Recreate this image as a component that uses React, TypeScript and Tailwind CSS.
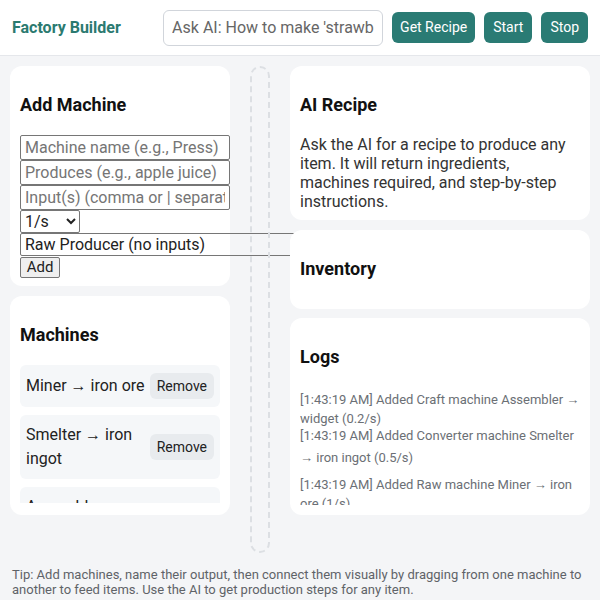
import React from "react";

const logs = [
  { text: "[1:43:19 AM] Added Craft machine Assembler → widget (0.2/s)", cls: "mt-0" },
  { text: "[1:43:19 AM] Added Converter machine Smelter → iron ingot (0.5/s)", cls: "-mt-[3px] leading-[22px]" },
  { text: "[1:43:19 AM] Added Raw machine Miner → iron ore (1/s)", cls: "mt-[6px]" },
];

const machines = ["Miner → iron ore", "Smelter → iron ingot", "Assembler → widget"];

function Card({ title, children, className = "" }: { title: string; children?: React.ReactNode; className?: string }) {
  return (
    <section className={`bg-white rounded-xl p-[10px] ${className}`}>
      <h3 className="mt-[17px] mb-[18px] text-[18px] leading-6 font-bold text-[#111]">{title}</h3>
      {children}
    </section>
  );
}

export default function App() {
  return (
    <div className="min-h-[600px] bg-[#f4f5f7] text-[#222]" style={{ fontFamily: "Roboto, 'Noto Sans', sans-serif" }}>
      <header className="h-[56px] bg-white border-b border-[#e5e7eb] flex items-center justify-between px-3">
        <h1 className="text-[16px] font-bold text-[#2b7a70]">Factory Builder</h1>
        <div className="flex items-center gap-[9px]">
          <input
            className="w-[220px] h-[36px] rounded-md border border-[#d1d5db] px-2 text-[16px] placeholder:text-[#666] outline-none"
            placeholder="Ask AI: How to make 'strawberry jam'?"
          />
          <button className="h-[31px] px-2 rounded-md bg-[#2a7b74] text-white text-[14px]">Get Recipe</button>
          <button className="h-[31px] px-[9px] rounded-md bg-[#2a7b74] text-white text-[14px]">Start</button>
          <button className="h-[31px] px-[9px] rounded-md bg-[#2a7b74] text-white text-[14px]">Stop</button>
        </div>
      </header>

      <main className="flex gap-5 px-[10px] pt-[10px]">
        <div className="w-[220px] flex flex-col gap-[10px]">
          <Card title="Add Machine" className="h-[220px]">
            <div className="flex flex-col items-start">
              <input className="block w-[210px] h-[25px] border border-[#767676] rounded-[2px] px-1 text-[16px] placeholder:text-[#757575]" placeholder="Machine name (e.g., Press)" />
              <input className="block w-[210px] h-[25px] border border-[#767676] rounded-[2px] px-1 text-[16px] placeholder:text-[#757575]" placeholder="Produces (e.g., apple juice)" />
              <input className="block w-[210px] h-[25px] border border-[#767676] rounded-[2px] px-1 text-[16px] placeholder:text-[#757575]" placeholder="Input(s) (comma or | separated)" />
              <select className="block w-[60px] h-[23px] border border-[#767676] rounded-[2px] text-[16px] bg-white">
                <option>1/s</option>
              </select>
              <select className="block w-[300px] h-[23px] border border-[#767676] rounded-[2px] text-[16px] bg-transparent">
                <option>Raw Producer (no inputs)</option>
              </select>
              <button className="mt-[1px] w-[40px] h-[21px] border border-[#767676] rounded-[2px] bg-[#efefef] text-[15px] leading-none">Add</button>
            </div>
          </Card>

          <Card title="Machines" className="h-[219px]">
            <div className="h-[138px] overflow-hidden flex flex-col gap-2">
              {machines.map((m) => (
                <div key={m} className="bg-[#f5f7f9] rounded-md py-2 pl-[6px] pr-[6px] flex items-center justify-between gap-[2px] shrink-0">
                  <span className="text-[16px] leading-6">{m}</span>
                  <button className="shrink-0 h-[26px] px-[7px] rounded-md bg-[#e8ebee] text-[14px] text-[#222]">Remove</button>
                </div>
              ))}
            </div>
          </Card>
        </div>

        <div className="w-[20px] h-[487px] border-2 border-dashed border-[#dcdfe3] rounded-xl" />

        <div className="relative w-[300px] flex flex-col">
          <Card title="AI Recipe" className="h-[154px]">
            <p className="text-[16px] leading-[19px] text-[#333]">
              Ask the AI for a recipe to produce any item. It will return ingredients, machines required, and step-by-step instructions.
            </p>
          </Card>
          <Card title="Inventory" className="mt-[10px] h-[79px]" />
          <Card title="Logs" className="mt-[9px] h-[197px]">
            <div className="h-[118px] overflow-hidden pt-[3px]">
              {logs.map((l) => (
                <div key={l.text} className={`text-[13px] leading-[19px] text-[#6b6f75] ${l.cls}`}>
                  {l.text}
                </div>
              ))}
            </div>
          </Card>
        </div>
      </main>

      <footer className="px-3 pt-[14px] text-[13px] leading-[15px] text-[#5f6368]">
        Tip: Add machines, name their output, then connect them visually by dragging from one machine to another to feed items. Use the AI to get production steps for any item.
      </footer>
    </div>
  );
}
